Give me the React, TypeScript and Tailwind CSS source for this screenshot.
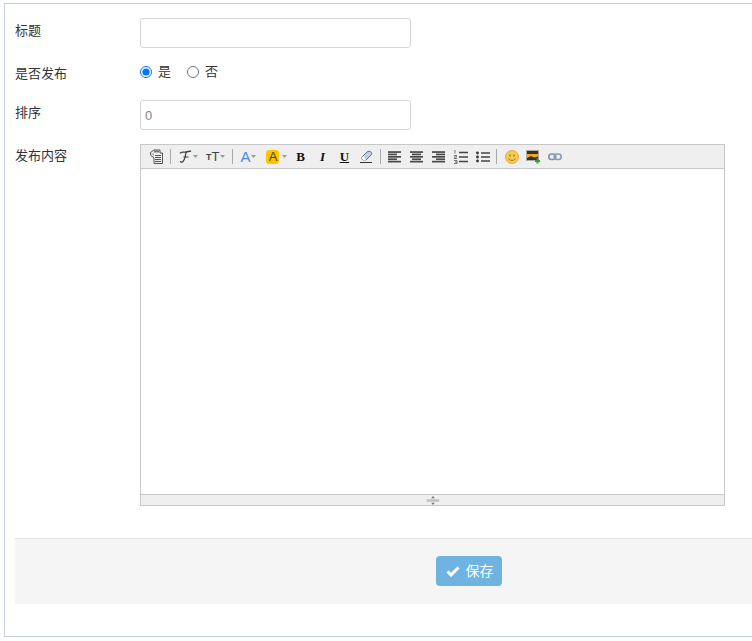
import React from 'react';

const Sep = () => <span className="w-px h-[15px] bg-[#a8a8a8] shrink-0" />;

const Caret = () => (
  <svg width="5" height="3" viewBox="0 0 5 3" className="ml-px">
    <path d="M0 0h5L2.5 3z" fill="#9a9a9a" />
  </svg>
);

const Lines = ({ kind }: { kind: 'left' | 'center' | 'right' }) => (
  <svg width="13" height="12" viewBox="0 0 13 12">
    {[0, 1, 2, 3, 4].map(i => {
      const ww = i % 2 ? 9 : 13;
      const x = kind === 'left' ? 0 : kind === 'center' ? (13 - ww) / 2 : 13 - ww;
      return <rect key={i} x={x} y={i * 2.4 + 0.2} width={ww} height="1.7" fill="#4a4a4a" />;
    })}
  </svg>
);

const Toolbar = () => (
  <div className="h-[24px] bg-[#efefef] border-b border-[#c8c8c8] flex items-center pl-[9px] shrink-0">
    {/* paste */}
    <svg width="14" height="15" viewBox="0 0 14 15" className="mr-[6px]">
      <path d="M0.5 3.5L4 1h6v3h2.5v10.500H4V9L0.500 6z" fill="#efefef" stroke="#555" />
      <path d="M5 6.500h6M5 8.500h6M5 10.500h6M5 12.500h6" stroke="#555" />
      <path d="M4 1.500h5v2H4z" fill="#777" />
      <path d="M1 4h3v4" fill="#bbb" />
    </svg>
    <Sep />
    {/* font family */}
    <span className="ml-[8px] flex items-center w-[19px]">
      <svg width="13" height="13" viewBox="0 0 13 13">
        <path d="M1 3.500C2 1 5 2.500 7 2s3-.5 5-1" fill="none" stroke="#444" strokeWidth="1.300" />
        <path d="M7 2C6.500 6 6 10 3.500 12 2.500 12.500 1.500 12 1.500 11" fill="none" stroke="#444" strokeWidth="1.300" />
        <path d="M4.500 7h5" stroke="#444" strokeWidth="1.100" />
      </svg>
      <Caret />
    </span>
    <span className="ml-[8px] flex items-center mr-[7px] font-['Liberation_Sans',sans-serif] text-[#444] leading-none">
      <span className="text-[9px] mt-[2px] font-bold">T</span>
      <span className="text-[13px]">T</span>
      <Caret />
    </span>
    <Sep />
    <span className="ml-[7px] flex items-center font-['Liberation_Sans',sans-serif] text-[15px] leading-none text-[#4a86e8]">
      A
      <Caret />
    </span>
    <span className="ml-[10px] flex items-center">
      <span className="w-[13px] h-[14px] rounded-[3px] bg-[#ffc600] text-[#4a3c00] font-['Liberation_Sans',sans-serif] text-[13px] leading-[14px] text-center">A</span>
      <span className="ml-[2px] flex"><Caret /></span>
    </span>
    <span className="ml-[7px] w-[12px] text-center font-['Liberation_Serif',serif] font-bold text-[13px] leading-none text-[#111]">B</span>
    <span className="ml-[10px] w-[12px] text-center font-['Liberation_Serif',serif] font-bold italic text-[13px] leading-none text-[#111]">I</span>
    <span className="ml-[10px] w-[12px] text-center font-['Liberation_Serif',serif] font-bold underline text-[13px] leading-none text-[#111]">U</span>
    {/* eraser */}
    <svg width="14" height="13" viewBox="0 0 14 13" className="ml-[9px] mr-[7px]">
      <path d="M2 8l6-6c1-1 3-1 4 0s1 2 0 3L7 10H4z" fill="#c3cfe4" stroke="#5d6f92" />
      <path d="M2 8l3 2.500 2-.5-2.500-4z" fill="#fff" />
      <path d="M1 12.500h12" stroke="#333" />
    </svg>
    <Sep />
    <span className="ml-[7px] flex"><Lines kind="left" /></span>
    <span className="ml-[9px] flex"><Lines kind="center" /></span>
    <span className="ml-[9px] flex"><Lines kind="right" /></span>
    {/* numbered list */}
    <svg width="14" height="14" viewBox="0 0 14 14" className="ml-[9px]">
      <path d="M5 2.500h9M5 7h9M5 11.500h9" stroke="#444" strokeWidth="1.400" />
      <path d="M1 0v3.500M0 5.500h2.500v1.500H0V8.500h3M0 10.500h3v3H0M1 12h2" stroke="#555" strokeWidth="0.800" fill="none" />
    </svg>
    {/* bullet list */}
    <svg width="14" height="12" viewBox="0 0 14 12" className="ml-[8px] mr-[6px]">
      <path d="M5 2h9M5 6h9M5 10h9" stroke="#444" strokeWidth="1.400" />
      <circle cx="1.500" cy="2" r="1.400" fill="#333" />
      <circle cx="1.500" cy="6" r="1.400" fill="#333" />
      <circle cx="1.500" cy="10" r="1.400" fill="#333" />
    </svg>
    <Sep />
    {/* smiley */}
    <svg width="14" height="14" viewBox="0 0 14 14" className="ml-[8px]">
      <circle cx="7" cy="7" r="6.500" fill="#f7ca55" stroke="#e8ad30" />
      <circle cx="5" cy="5.500" r="0.900" fill="#a07818" />
      <circle cx="9" cy="5.500" r="0.900" fill="#a07818" />
      <path d="M3.500 8.500c1.500 2.500 5.500 2.500 7 0" stroke="#a87c18" fill="none" />
    </svg>
    {/* image */}
    <svg width="14" height="14" viewBox="0 0 14 14" className="ml-[7px]">
      <rect x="0.500" y="0.500" width="12" height="10" fill="#3a3024" stroke="#aaa" />
      <path d="M1 4h11v2.500l-4 1-3-1.500-4 2z" fill="#f4a81e" />
      <path d="M9 11h5M11.500 8.500v5" stroke="#2e9e3e" strokeWidth="2" />
    </svg>
    {/* link */}
    <svg width="14" height="8" viewBox="0 0 14 8" className="ml-[8px]">
      <rect x="0.800" y="1" width="7" height="5.500" rx="2.700" fill="none" stroke="#7d90ad" strokeWidth="1.600" />
      <rect x="6.200" y="1" width="7" height="5.500" rx="2.700" fill="none" stroke="#8c9cb6" strokeWidth="1.600" />
    </svg>
  </div>
);

const Row = ({ label, className, labelClass, children }: { label: string; className: string; labelClass: string; children: React.ReactNode }) => (
  <div className={`flex ${className}`}>
    <label className={`w-[125px] shrink-0 text-[13px] leading-[18px] text-[#333] ${labelClass}`}>{label}</label>
    {children}
  </div>
);

export default function App() {
  return (
    <div className="w-[752px] h-[641px] overflow-hidden bg-white font-['Liberation_Sans','Noto_Sans_CJK_SC',sans-serif]">
      <div className="mt-[3px] ml-[4px] w-[760px] h-[634px] border border-[#c5d0dc] pl-[10px] pt-[14px]">
        <Row label="标题" className="" labelClass="pt-[4px]">
          <input className="w-[271px] h-[30px] border border-[#d5d5d5] rounded-[3px] bg-white" />
        </Row>
        <Row label="是否发布" className="mt-[16px]" labelClass="pt-[1px]">
          <div className="flex items-center h-[14px] text-[13px] text-[#333] mt-px">
            <input type="radio" name="pub" defaultChecked className="w-[12px] h-[12px] m-0 ml-0 accent-[#0075ff]" />
            <span className="ml-[6px]">是</span>
            <input type="radio" name="pub" className="w-[12px] h-[12px] m-0 ml-[16px]" />
            <span className="ml-[6px]">否</span>
          </div>
        </Row>
        <Row label="排序" className="mt-[17px]" labelClass="pt-[4px]">
          <input
            defaultValue="0"
            className="w-[271px] h-[30px] border border-[#d5d5d5] rounded-[3px] bg-white px-[4px] text-[13px] text-[#858585] outline-none"
          />
        </Row>
        <Row label="发布内容" className="mt-[14px]" labelClass="pt-[3px]">
          <div className="w-[585px] h-[362px] border border-[#c8c8c8] flex flex-col">
            <Toolbar />
            <div className="flex-1 bg-white" />
            <div className="h-[11px] bg-[#efefef] border-t border-[#c8c8c8] flex items-center justify-center shrink-0">
              <svg width="14" height="9" viewBox="0 0 14 10">
                <rect x="0" y="3.500" width="14" height="3" fill="#c4c4c4" />
                <path d="M7 0l2 2.500H5zM7 10l2-2.500H5z" fill="#777" />
              </svg>
            </div>
          </div>
        </Row>
        <div className="mt-[32px] h-[66px] border-t border-[#e5e5e5] bg-[#f5f5f5] flex items-start pt-[17px] pl-[421px]">
          <button className="w-[66px] h-[30px] rounded-[4px] bg-[#6fb3e0] text-white text-[14px] flex items-center justify-center gap-[6px] pl-px">
            <svg width="14" height="11" viewBox="0 0 14 11">
              <path d="M1.500 5.500l3.500 3.500 7.500-7.500" fill="none" stroke="#fff" strokeWidth="3" />
            </svg>
            <span>保存</span>
          </button>
        </div>
      </div>
    </div>
  );
}
